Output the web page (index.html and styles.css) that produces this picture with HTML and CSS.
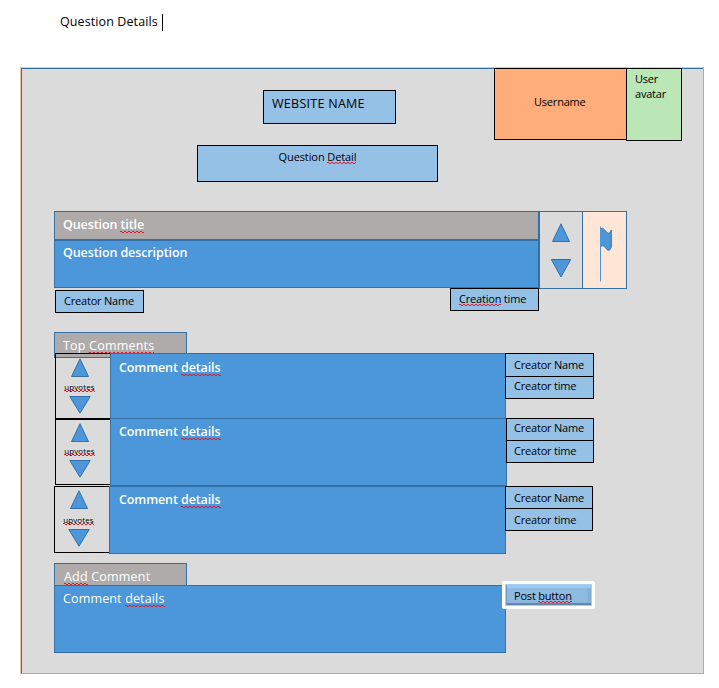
FILE: index.html
```html
<!DOCTYPE html>
<html lang="en">
<head>
<meta charset="utf-8">
<title>Question Details</title>
<link rel="stylesheet" href="styles.css">
</head>
<body>
<h1 class="caption"><span class="t-cap">Question Details</span><span class="caret"></span></h1>
<main class="board">
  <header class="header">
    <div class="titles">
      <div class="site-name">WEBSITE NAME</div>
      <div class="page-name">Question <span class="sp">Detail</span></div>
    </div>
    <div class="user">
      <div class="username">Username</div>
      <div class="avatar">User<br>avatar</div>
    </div>
  </header>

  <section class="question">
    <div class="q-text">
      <div class="q-title">Question <span class="sp">title</span></div>
      <div class="q-desc">Question description</div>
    </div>
    <div class="q-vote">
      <svg width="20" height="19" viewBox="0 0 20 19"><path class="shape" d="M10 .8 18.5 18.5H1.5Z"/></svg>
      <svg width="22" height="19" viewBox="0 0 22 19"><path class="shape" d="M1.300 .5H20.700L11 18Z"/></svg>
    </div>
    <div class="q-flag">
      <svg width="14" height="56" viewBox="0 0 14 56"><path class="flag" d="M1.500 3.500C4 1 5.500 4 7.500 6C9.500 8.500 11 7 12.300 4.500V21C11 24.500 9.500 25.500 7.500 23C5.500 20.500 4 18.500 1.500 21Z"/><path class="flag-edge" d="M2 3C4 1 5.500 4 7.500 6C9.500 8.500 11 7 12.300 4V21C11 24.500 9.500 25.500 7.500 23C5.500 20.500 4 18.500 2 20.500"/><path class="pole" d="M1.500 .5V55.500"/></svg>
    </div>
  </section>
  <div class="q-meta">
    <div class="tag">Creator Name</div>
    <div class="tag tag-time"><span class="sp">Creation</span> time</div>
  </div>

  <section class="comments">
    <div class="tab">Top <span class="sp">Comments</span></div>
    <article class="comment first">
      <div class="vote">
        <svg width="20" height="19" viewBox="0 0 20 19"><path class="shape" d="M10 .8 18.500 18.500H1.500Z"/></svg>
        <span class="up sp">upvotes</span>
        <svg width="22" height="18" viewBox="0 0 22 18"><path class="shape" d="M.8 .5H21.200L11 17.200Z"/></svg>
      </div>
      <div class="body">Comment <span class="sp">details</span></div>
      <div class="meta"><div>Creator Name</div><div>Creator time</div></div>
    </article>
    <article class="comment second">
      <div class="vote">
        <svg width="20" height="19" viewBox="0 0 20 19"><path class="shape" d="M10 .8 18.500 18.500H1.500Z"/></svg>
        <span class="up sp">upvotes</span>
        <svg width="22" height="18" viewBox="0 0 22 18"><path class="shape" d="M.8 .5H21.200L11 17.200Z"/></svg>
      </div>
      <div class="body">Comment <span class="sp">details</span></div>
      <div class="meta"><div>Creator Name</div><div>Creator time</div></div>
    </article>
    <article class="comment third">
      <div class="vote">
        <svg width="20" height="19" viewBox="0 0 20 19"><path class="shape" d="M10 .8 18.500 18.500H1.500Z"/></svg>
        <span class="up sp">upvotes</span>
        <svg width="22" height="18" viewBox="0 0 22 18"><path class="shape" d="M.8 .5H21.200L11 17.200Z"/></svg>
      </div>
      <div class="body">Comment <span class="sp">details</span></div>
      <div class="meta"><div>Creator Name</div><div>Creator time</div></div>
    </article>
  </section>

  <section class="add">
    <div class="tab add-tab"><span class="sp">Add</span> Comment</div>
    <div class="add-row">
      <div class="add-body">Comment <span class="sp">details</span></div>
      <button class="post" type="button"><span class="post-face">Post <span class="sp">button</span></span></button>
    </div>
  </section>
</main>
</body>
</html>
```
FILE: styles.css
```css
* { box-sizing: border-box; }
body {
  margin: 0;
  width: 719px;
  height: 688px;
  overflow: hidden;
  background: #fff;
  color: #000;
  font: 11px/15px "Open Sans", "Noto Sans", sans-serif;
  letter-spacing: -.2px;
}
svg { display: block; flex: none; }
.shape { fill: #4b97d9; stroke: #3570a5; stroke-width: 1; }
.flag { fill: #4b97d9; }
.flag-edge { fill: none; stroke: #3570a5; stroke-width: 1; }
.pole { fill: none; stroke: #4b97d9; stroke-width: 1; }

/* spell-check squiggle */
.sp {
  display: inline-block;
  background:
    linear-gradient(90deg, #f01020 50%, transparent 50%) 0 calc(100% - 1px) / 4px 1px repeat-x,
    linear-gradient(90deg, transparent 50%, #f01020 50%) 0 100% / 4px 1px repeat-x;
}

.caption {
  display: flex;
  align-items: flex-start;
  gap: 4px;
  height: 67px;
  margin: 0;
  padding: 14px 0 0 60px;
  font-size: 12.500px;
  font-weight: 400;
  line-height: 16px;
  letter-spacing: .1px;
}
.t-cap { width: 98px; white-space: nowrap; }
.caret { width: 1px; height: 17px; background: #000; }

.board {
  width: 684px;
  height: 607px;
  margin-left: 20px;
  border: 1px solid #f3c3a5;
  border-right-color: #bfa79f;
  border-bottom-color: #bfa79f;
  background: #dbdbdb;
  box-shadow: inset 1px 1px 0 #3570a5;
}
.header {
  display: flex;
  justify-content: space-between;
  height: 143px;
  padding-right: 21px;
}
.titles { padding: 22px 0 0 176px; }
.site-name {
  width: 133px;
  height: 34px;
  margin-left: 66px;
  padding: 5px 8px;
  border: 1px solid #000;
  background: #96c1e7;
  font-size: 12.500px;
  line-height: 16px;
  letter-spacing: .28px;
  white-space: nowrap;
}
.page-name {
  width: 241px;
  height: 37px;
  margin-top: 21px;
  padding-top: 3px;
  border: 1px solid #000;
  background: #96c1e7;
  text-align: center;
  letter-spacing: -.1px;
}
.user { display: flex; align-items: flex-start; }
.username {
  width: 133px;
  height: 72px;
  padding: 25px 0 0 39px;
  border: 1px solid #000;
  background: #ffad7b;
  letter-spacing: -.2px;
}
.avatar {
  width: 56px;
  height: 73px;
  margin-left: -1px;
  padding: 2px 8px;
  border: 1px solid #000;
  background: #bbe6b5;
}

.question { display: flex; padding-left: 33px; }
.q-text { width: 485px; height: 77px; font-size: 12.500px; font-weight: 600; color: #fff; line-height: 17px; letter-spacing: -.1px; }
.q-title { height: 29px; padding: 4px 8px; border: 1px solid #3570a5; background: #afabaa; }
.q-desc { height: 48px; padding: 3px 8px; border: 1px solid #3570a5; background: #4b97d9; }
.q-vote {
  display: flex;
  flex-direction: column;
  align-items: center;
  gap: 17px;
  width: 44px;
  height: 78px;
  padding-top: 11px;
  border: 1px solid #3570a5;
}
.q-flag {
  width: 45px;
  height: 78px;
  margin-left: -1px;
  padding: 14px 0 0 16px;
  border: 1px solid #3570a5;
  background: #ffe6d6;
}
.q-meta {
  display: flex;
  justify-content: space-between;
  width: 518px;
  height: 43px;
  padding-left: 34px;
}
.tag {
  width: 89px;
  height: 23px;
  margin-top: 1px;
  padding: 2px 8px;
  border: 1px solid #000;
  background: #96c1e7;
  white-space: nowrap;
}
.tag-time { margin-top: -1px; }

.comments { padding-left: 33px; }
.tab {
  width: 133px;
  height: 26px;
  padding: 5px 8px 0;
  border: 1px solid #3570a5;
  background: #afabaa;
  color: #fff;
  font-size: 12.500px;
  line-height: 16px;
  letter-spacing: .2px;
}
.comment { display: flex; align-items: flex-start; }
.vote {
  display: flex;
  flex-direction: column;
  align-items: center;
  width: 56px;
  height: 66px;
  padding: 3px 7px 0 0;
  border: 1px solid #000;
  background: #dbdbdb;
}
.up { margin: 7px 0 4px; height: 9px; font-size: 8px; line-height: 8px; letter-spacing: .1px; }
.body {
  width: 396px;
  height: 66px;
  margin-left: -1px;
  padding: 5px 8px;
  border: 1px solid #3570a5;
  background: #4b97d9;
  color: #fff;
  font-size: 12.500px;
  font-weight: 600;
  line-height: 17px;
  letter-spacing: -.1px;
}
.meta { margin-left: -1px; width: 89px; }
.meta div {
  height: 23px;
  padding: 3px 8px;
  border: 1px solid #000;
  background: #96c1e7;
  white-space: nowrap;
}
.meta div + div { margin-top: -1px; }
.first { margin: -5px 0 0 1px; }
.first .vote { padding-top: 4px; background: linear-gradient(#afabaa 3px, #3570a5 3px 4px, #dbdbdb 4px); }
.first .up { margin-top: 6px; }
.first .meta div:first-child { height: 24px; padding-top: 3px; }
.first .meta div + div { padding-top: 1px; }
.second { margin: -1px 0 0 1px; }
.second .vote { margin-top: 1px; }
.second .up { margin: 5px 0 4px; }
.second .body { width: 397px; height: 68px; padding-top: 4px; }
.second .meta { width: 88px; }
.second .meta div { padding-left: 7px; padding-top: 1px; }
.second .meta div + div { padding-top: 2px; }
.third .vote { height: 67px; }
.third .body { width: 397px; height: 68px; padding-left: 9px; padding-top: 4px; }
.third .meta { width: 88px; }

.add { padding: 9px 0 0 33px; }
.add-tab { height: 23px; padding-left: 9px; }
.add-row { display: flex; align-items: flex-start; margin-top: -1px; }
.add-body {
  width: 452px;
  height: 68px;
  padding: 5px 8px;
  border: 1px solid #3570a5;
  background: #4b97d9;
  color: #fff;
  font-size: 12.500px;
  line-height: 16px;
  letter-spacing: .15px;
}
.post {
  width: 93px;
  height: 28px;
  margin: -4px 0 0 -4px;
  padding: 3px;
  border: 0;
  border-radius: 2px;
  background: #fff;
  color: #000;
  font: inherit;
  letter-spacing: inherit;
  text-align: left;
}
.post-face {
  display: block;
  height: 22px;
  padding: 4px 9px 0;
  background: #8fbae0;
  box-shadow:
    inset 0 0 0 1px #a5cdf0,
    inset 2px 0 1px #6f9cc6,
    inset 0 4px 1px #9bcaf5,
    inset 0 -3px 1px #5f86ab,
    inset -4px 0 2px #82add5;
  line-height: 15px;
}
```
